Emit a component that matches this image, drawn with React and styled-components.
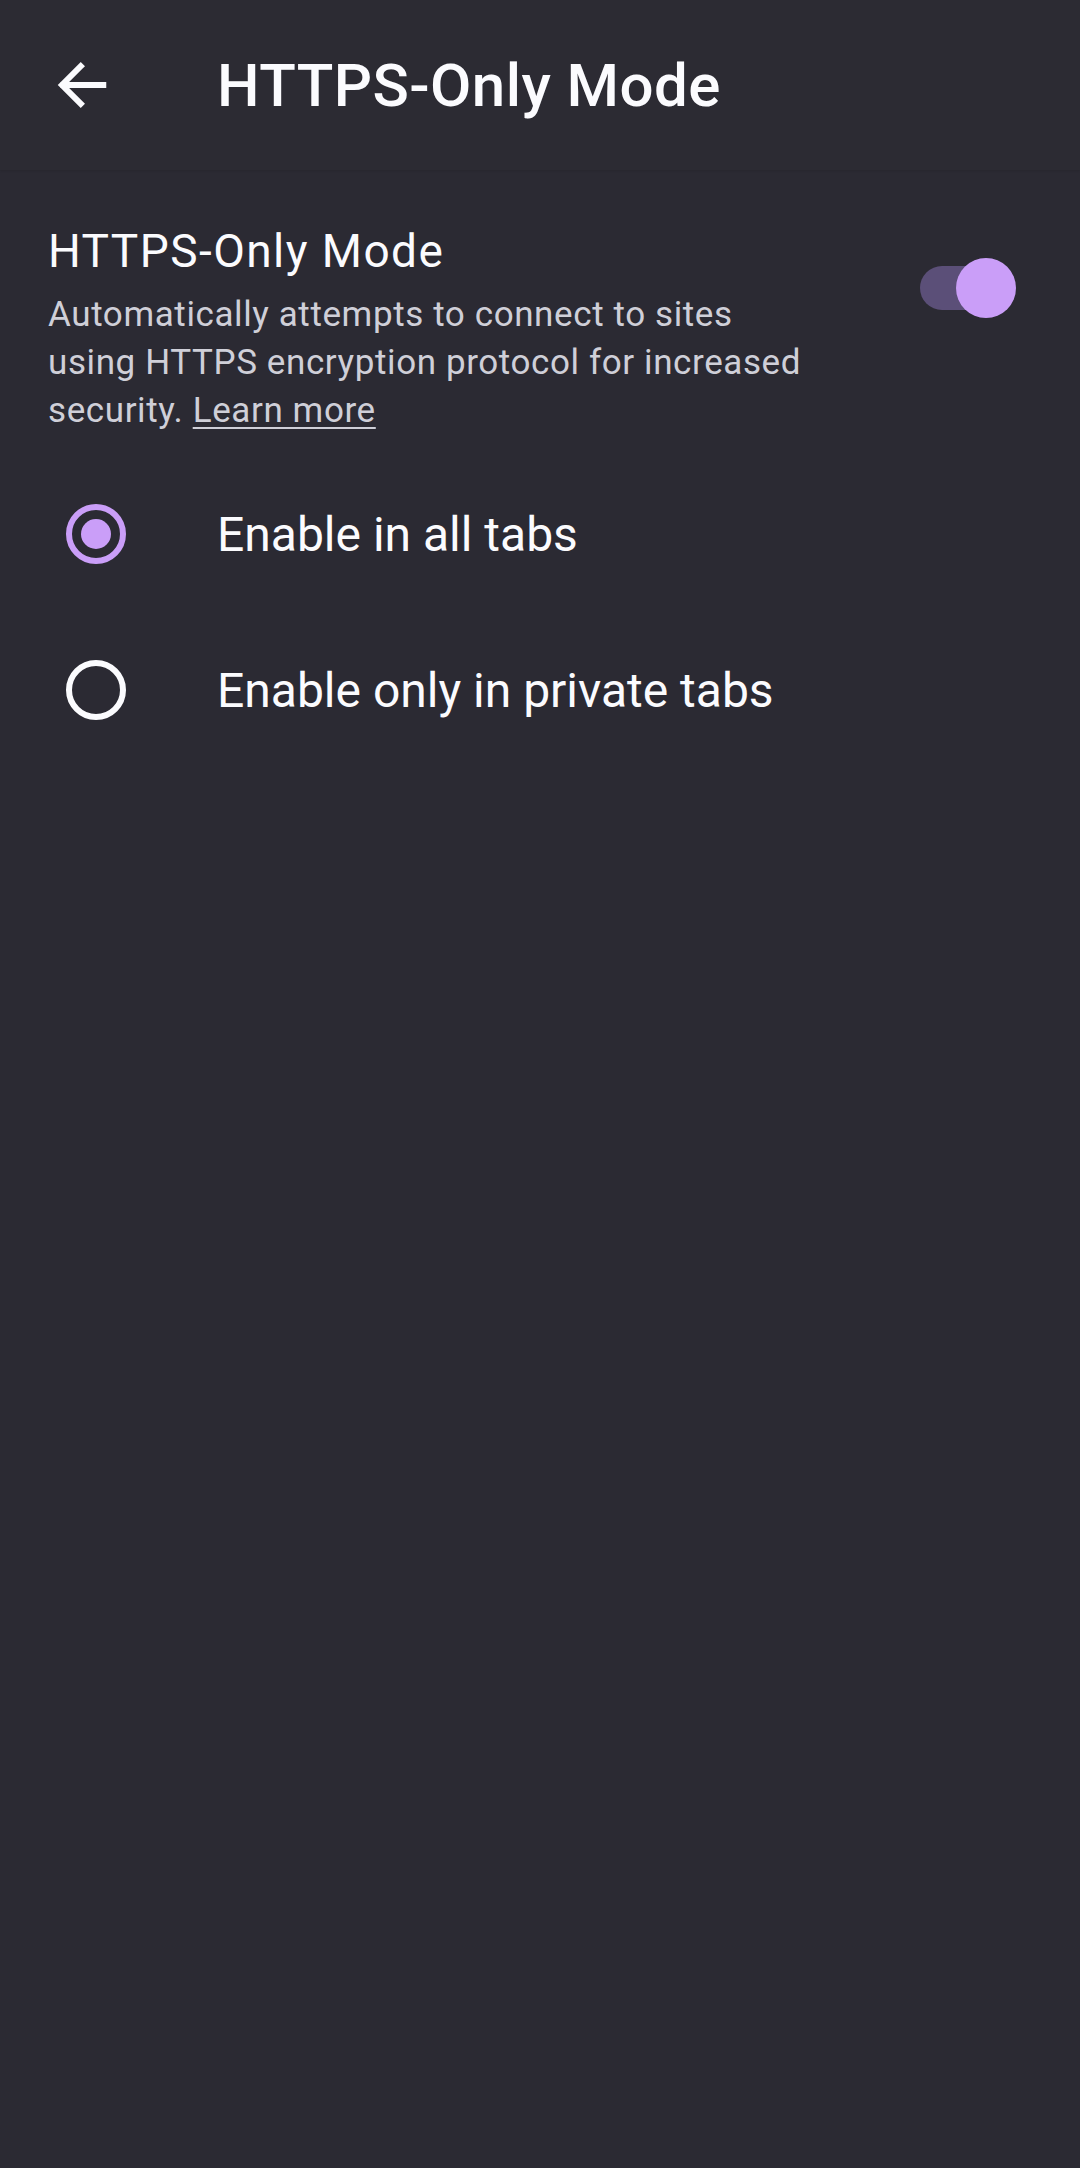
import React, { useState } from "react";
import styled, { createGlobalStyle } from "styled-components";

const BG = "#2b2a33";
const ACCENT = "#ca9ef8";
const TEXT = "#fbfbfe";
const MUTED = "#cfcfd8";

const GlobalStyle = createGlobalStyle`
  html, body {
    margin: 0;
    padding: 0;
    background: ${BG};
  }
  body {
    font-family: Roboto, "Noto Sans", "Liberation Sans", sans-serif;
    color: ${TEXT};
    -webkit-font-smoothing: antialiased;
  }
`;

const Screen = styled.div`
  width: 1080px;
  min-height: 2168px;
  background: ${BG};
  display: flex;
  flex-direction: column;
`;

const TopBar = styled.header`
  height: 170px;
  display: flex;
  align-items: center;
  padding-left: 50px;
  box-sizing: border-box;
  background: #2c2b33;
  box-shadow: 0 1px 2px rgba(0, 0, 0, 0.1);
`;

const BackButton = styled.button`
  width: 64px;
  height: 64px;
  padding: 0;
  border: none;
  background: none;
  color: ${TEXT};
  display: flex;
  align-items: center;
  justify-content: center;
  margin-right: 103px;
`;

const Title = styled.h1`
  margin: 0;
  font-size: 60px;
  font-weight: 500;
  letter-spacing: 0.45px;
`;

const Content = styled.main`
  display: flex;
  flex-direction: column;
`;

const SwitchRow = styled.div`
  display: flex;
  align-items: flex-start;
  justify-content: space-between;
  padding: 53px 70px 0 48px;
`;

const SwitchText = styled.div`
  width: 766px;
`;

const SettingTitle = styled.div`
  font-size: 46px;
  line-height: 56px;
  letter-spacing: 1.45px;
`;

const Summary = styled.p`
  margin: 12px 0 0;
  font-size: 35px;
  line-height: 48px;
  letter-spacing: 0.6px;
  color: ${MUTED};
`;

const LearnMore = styled.a`
  color: ${MUTED};
  text-decoration: underline;
  text-underline-offset: 5px;
  text-decoration-thickness: 2px;
`;

const Track = styled.div`
  position: relative;
  width: 90px;
  height: 44px;
  margin-top: 43px;
  border-radius: 22px;
  background: ${(p) => (p.on ? "#5b4f78" : "#52525e")};
  cursor: pointer;
`;

const Thumb = styled.div`
  position: absolute;
  top: -8px;
  left: ${(p) => (p.on ? "36px" : "0")};
  width: 60px;
  height: 60px;
  border-radius: 50%;
  background: ${(p) => (p.on ? ACCENT : "#bfbfc9")};
`;

const RadioGroup = styled.div`
  display: flex;
  flex-direction: column;
  padding-top: 21px;
`;

const RadioRow = styled.label`
  display: flex;
  align-items: center;
  height: 156px;
  padding-left: 66px;
  cursor: pointer;
`;

const RadioCircle = styled.span`
  box-sizing: border-box;
  width: 60px;
  height: 60px;
  border-radius: 50%;
  border: 6px solid ${(p) => (p.checked ? ACCENT : TEXT)};
  display: flex;
  align-items: center;
  justify-content: center;
  margin-right: 91px;

  &::after {
    content: "";
    width: 30px;
    height: 30px;
    border-radius: 50%;
    background: ${ACCENT};
    display: ${(p) => (p.checked ? "block" : "none")};
  }
`;

const RadioLabel = styled.span`
  font-size: 48px;
  color: ${TEXT};
`;

const Switch = ({ on, onToggle }) => (
  <Track on={on} onClick={onToggle}>
    <Thumb on={on} />
  </Track>
);

const options = [
  { id: "all", label: "Enable in all tabs" },
  { id: "private", label: "Enable only in private tabs" },
];

export default function App() {
  const [enabled, setEnabled] = useState(true);
  const [mode, setMode] = useState("all");

  return (
    <Screen>
      <GlobalStyle />
      <TopBar>
        <BackButton aria-label="Back">
          <svg width="60" height="60" viewBox="0 0 24 24" fill="none">
            <path
              d="M20.5 12H4.5M11.5 4.5L4 12l7.5 7.5"
              stroke="currentColor"
              strokeWidth="2.4"
              strokeLinecap="square"
            />
          </svg>
        </BackButton>
        <Title>HTTPS-Only Mode</Title>
      </TopBar>
      <Content>
        <SwitchRow>
          <SwitchText>
            <SettingTitle>HTTPS-Only Mode</SettingTitle>
            <Summary>
              Automatically attempts to connect to sites using HTTPS encryption
              protocol for increased security. <LearnMore>Learn more</LearnMore>
            </Summary>
          </SwitchText>
          <Switch on={enabled} onToggle={() => setEnabled(!enabled)} />
        </SwitchRow>
        <RadioGroup>
          {options.map((o) => (
            <RadioRow key={o.id} onClick={() => setMode(o.id)}>
              <RadioCircle checked={mode === o.id} />
              <RadioLabel>{o.label}</RadioLabel>
            </RadioRow>
          ))}
        </RadioGroup>
      </Content>
    </Screen>
  );
}
